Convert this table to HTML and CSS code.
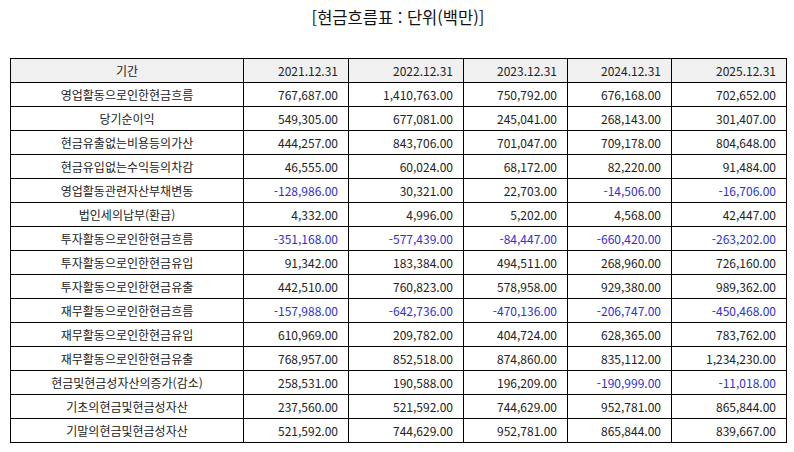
FILE: index.html
```html
<!DOCTYPE html>
<html lang="ko">
<head>
<meta charset="utf-8">
<link rel="stylesheet" href="styles.css">
</head>
<body>
<div class="page">
  <h1 class="title">[현금흐름표 : 단위(백만)]</h1>
  <table class="grid">
    <colgroup>
      <col class="c0"><col class="c1"><col class="c2"><col class="c3"><col class="c4"><col class="c5">
    </colgroup>
    <thead>
      <tr><th class="label">기간</th><th>2021.12.31</th><th>2022.12.31</th><th>2023.12.31</th><th>2024.12.31</th><th>2025.12.31</th></tr>
    </thead>
    <tbody>
      <tr><td class="label">영업활동으로인한현금흐름</td><td>767,687.00</td><td>1,410,763.00</td><td>750,792.00</td><td>676,168.00</td><td>702,652.00</td></tr>
      <tr><td class="label">당기순이익</td><td>549,305.00</td><td>677,081.00</td><td>245,041.00</td><td>268,143.00</td><td>301,407.00</td></tr>
      <tr><td class="label">현금유출없는비용등의가산</td><td>444,257.00</td><td>843,706.00</td><td>701,047.00</td><td>709,178.00</td><td>804,648.00</td></tr>
      <tr><td class="label">현금유입없는수익등의차감</td><td>46,555.00</td><td>60,024.00</td><td>68,172.00</td><td>82,220.00</td><td>91,484.00</td></tr>
      <tr><td class="label">영업활동관련자산부채변동</td><td class="neg">-128,986.00</td><td>30,321.00</td><td>22,703.00</td><td class="neg">-14,506.00</td><td class="neg">-16,706.00</td></tr>
      <tr><td class="label">법인세의납부(환급)</td><td>4,332.00</td><td>4,996.00</td><td>5,202.00</td><td>4,568.00</td><td>42,447.00</td></tr>
      <tr><td class="label">투자활동으로인한현금흐름</td><td class="neg">-351,168.00</td><td class="neg">-577,439.00</td><td class="neg">-84,447.00</td><td class="neg">-660,420.00</td><td class="neg">-263,202.00</td></tr>
      <tr><td class="label">투자활동으로인한현금유입</td><td>91,342.00</td><td>183,384.00</td><td>494,511.00</td><td>268,960.00</td><td>726,160.00</td></tr>
      <tr><td class="label">투자활동으로인한현금유출</td><td>442,510.00</td><td>760,823.00</td><td>578,958.00</td><td>929,380.00</td><td>989,362.00</td></tr>
      <tr><td class="label">재무활동으로인한현금흐름</td><td class="neg">-157,988.00</td><td class="neg">-642,736.00</td><td class="neg">-470,136.00</td><td class="neg">-206,747.00</td><td class="neg">-450,468.00</td></tr>
      <tr><td class="label">재무활동으로인한현금유입</td><td>610,969.00</td><td>209,782.00</td><td>404,724.00</td><td>628,365.00</td><td>783,762.00</td></tr>
      <tr><td class="label">재무활동으로인한현금유출</td><td>768,957.00</td><td>852,518.00</td><td>874,860.00</td><td>835,112.00</td><td>1,234,230.00</td></tr>
      <tr><td class="label">현금및현금성자산의증가(감소)</td><td>258,531.00</td><td>190,588.00</td><td>196,209.00</td><td class="neg">-190,999.00</td><td class="neg">-11,018.00</td></tr>
      <tr><td class="label">기초의현금및현금성자산</td><td>237,560.00</td><td>521,592.00</td><td>744,629.00</td><td>952,781.00</td><td>865,844.00</td></tr>
      <tr><td class="label">기말의현금및현금성자산</td><td>521,592.00</td><td>744,629.00</td><td>952,781.00</td><td>865,844.00</td><td>839,667.00</td></tr>
    </tbody>
  </table>
</div>
</body>
</html>
```

FILE: styles.css
```css
html, body {
  margin: 0;
  padding: 0;
  background: #ffffff;
}
.page {
  padding: 0 8px 0 10px;
  font-family: "Noto Sans CJK KR", "Noto Sans", sans-serif;
  color: #222222;
}
.title {
  margin: 0;
  height: 58px;
  padding-top: 5px;
  box-sizing: border-box;
  text-align: center;
  font-size: 16.5px;
  font-weight: normal;
  line-height: 24px;
  color: #111111;
}
.grid {
  border-collapse: collapse;
  table-layout: fixed;
  width: 776px;
  font-size: 12px;
}
.c0 { width: 233px; }
.c1 { width: 105px; }
.c2 { width: 115px; }
.c3 { width: 104px; }
.c4 { width: 104px; }
.c5 { width: 115px; }
.grid th, .grid td {
  border: 1px solid #000000;
  height: 24px;
  padding: 0 10px 0 4px;
  text-align: right;
  font-weight: normal;
  line-height: 14px;
  white-space: nowrap;
  box-sizing: border-box;
}
.grid th {
  background: #f0f0f0;
}
.grid .label {
  text-align: center;
  padding: 0 4px;
}
.grid .neg {
  color: #2f2fd6;
}
```
